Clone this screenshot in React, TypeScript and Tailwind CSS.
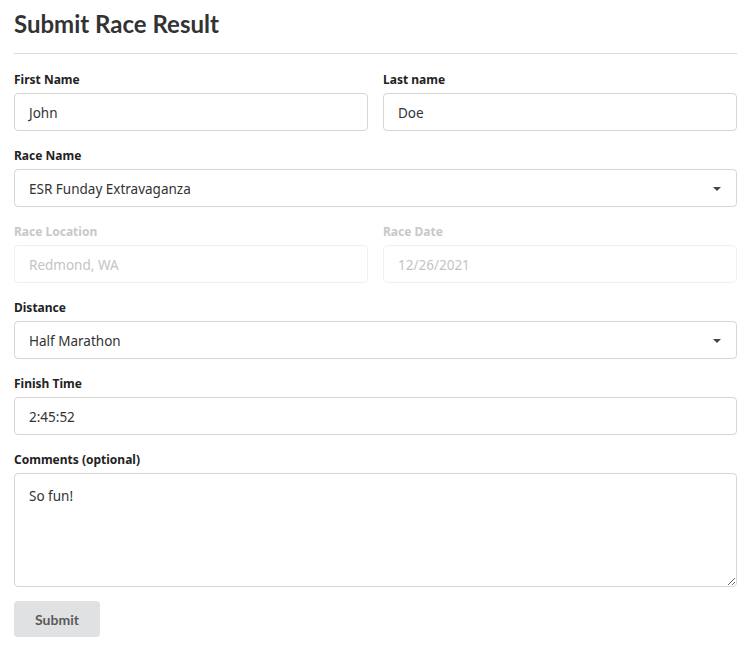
import React from "react";

const labelCls = "block text-[12px] leading-[18px] font-bold mb-1";
const boxCls = "h-[38px] flex items-center px-[14px] pt-[2px] rounded border text-[13.5px]";

const Caret = () => (
  <svg width="10" height="6" viewBox="0 0 10 6" className="ml-auto mr-[2px]">
    <path d="M1 1 L9 1 L5 5 Z" fill="#444" />
  </svg>
);

export default function App() {
  return (
    <div className="w-[750px] min-h-[649px] bg-white pl-[14px] pr-[13px] text-[#333]" style={{ fontFamily: "'Noto Sans', 'Open Sans', sans-serif" }}>
      <h1 className="pt-[8px] pb-[13px] text-[24px] leading-[32px] font-bold text-[#333] border-b border-[#dcdcdc]" style={{ fontFamily: "Lato, sans-serif" }}>
        Submit Race Result
      </h1>

      <div className="mt-[17px] grid grid-cols-2 gap-x-[15px]">
        <div className="mb-4">
          <label className={`${labelCls} text-[#222]`}>First Name</label>
          <div className={`${boxCls} border-[#d6d6d6]`}>John</div>
        </div>
        <div className="mb-4">
          <label className={`${labelCls} text-[#222]`}>Last name</label>
          <div className={`${boxCls} border-[#d6d6d6]`}>Doe</div>
        </div>
      </div>

      <div className="mb-4">
        <label className={`${labelCls} text-[#222]`}>Race Name</label>
        <div className={`${boxCls} border-[#d6d6d6] pr-[12px]`}>
          ESR Funday Extravaganza
          <Caret />
        </div>
      </div>

      <div className="grid grid-cols-2 gap-x-[15px]">
        <div className="mb-4">
          <label className={`${labelCls} text-[#c8c8c8]`}>Race Location</label>
          <div className={`${boxCls} border-[#f0f0f0] text-[#c4c4c4]`}>Redmond, WA</div>
        </div>
        <div className="mb-4">
          <label className={`${labelCls} text-[#c8c8c8]`}>Race Date</label>
          <div className={`${boxCls} border-[#f0f0f0] text-[#c4c4c4]`}>12/26/2021</div>
        </div>
      </div>

      <div className="mb-4">
        <label className={`${labelCls} text-[#222]`}>Distance</label>
        <div className={`${boxCls} border-[#d6d6d6] pr-[12px]`}>
          Half Marathon
          <Caret />
        </div>
      </div>

      <div className="mb-4">
        <label className={`${labelCls} text-[#222]`}>Finish Time</label>
        <div className={`${boxCls} border-[#d6d6d6]`}>2:45:52</div>
      </div>

      <div className="mb-[14px]">
        <label className={`${labelCls} text-[#222]`}>Comments (optional)</label>
        <textarea
          readOnly
          defaultValue="So fun!"
          className="block w-full h-[114px] rounded border border-[#d6d6d6] px-[14px] pt-[11px] pb-[9px] text-[13.5px] leading-[22px] text-[#333] outline-none"
          style={{ resize: "both" }}
        />
      </div>

      <button className="w-[86px] h-[36px] rounded bg-[#e0e1e3] text-[14px] font-bold text-[#5a5a5a]" style={{ fontFamily: "Lato, sans-serif" }}>
        Submit
      </button>
    </div>
  );
}
